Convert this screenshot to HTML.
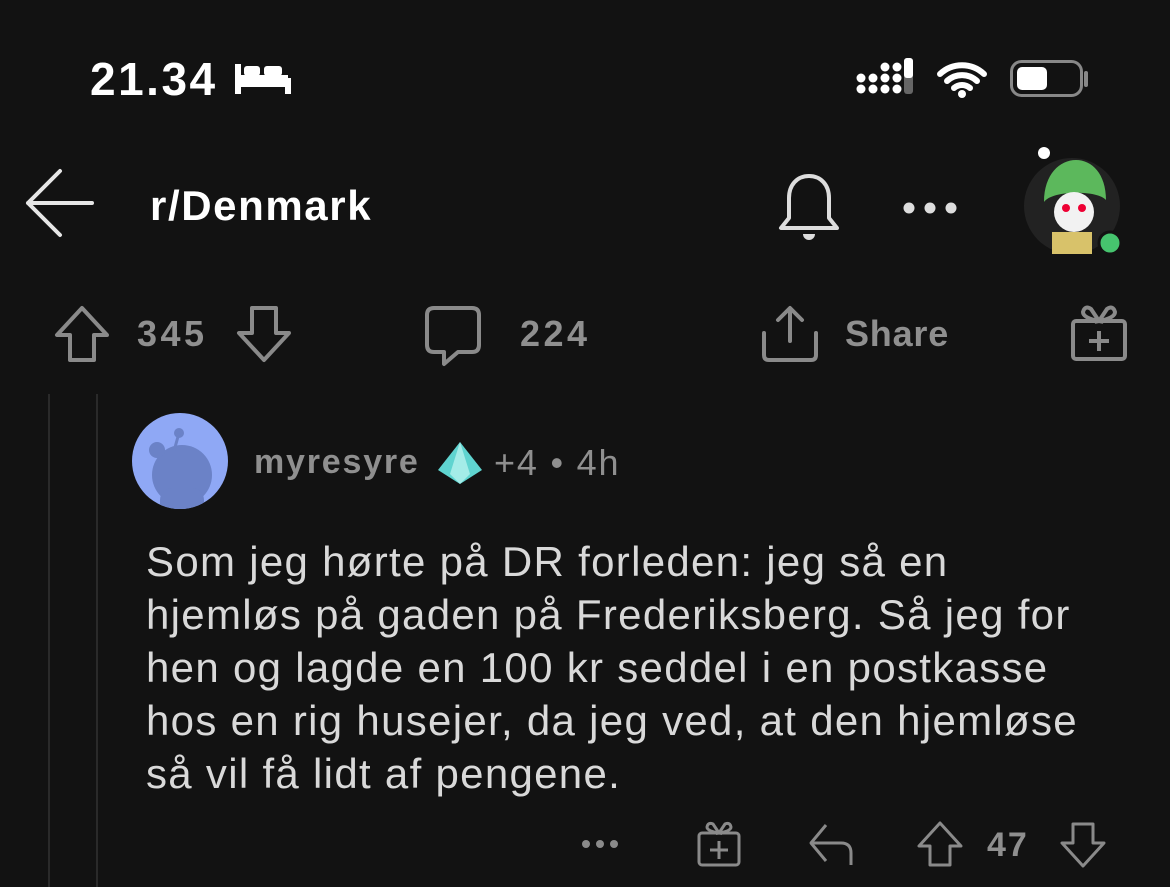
<!DOCTYPE html>
<html><head><meta charset="utf-8"><style>
body{margin:0;width:1170px;height:887px;background:#121212;overflow:hidden;font-family:"Liberation Sans",sans-serif;position:relative}
.a{position:absolute;white-space:nowrap}
svg{position:absolute;overflow:visible}
</style></head><body>
<div class="a" style="left:90px;top:52px;font-size:46px;font-weight:bold;color:#fff;letter-spacing:2.5px">21.34</div>
<svg style="left:236px;top:60px" width="54" height="36"><path d="M2 4v30M52 18v16M2 24h50" stroke="#fff" stroke-width="6" fill="none"/><rect x="2" y="15" width="50" height="10" fill="#fff"/><rect x="8" y="6" width="16" height="10" rx="3" fill="#fff"/><rect x="28" y="6" width="18" height="10" rx="3" fill="#fff"/></svg>
<svg style="left:856px;top:58px" width="60" height="40" fill="#fff"><circle cx="5" cy="31" r="4.5"/><circle cx="5" cy="20" r="4.5"/><circle cx="17" cy="31" r="4.5"/><circle cx="17" cy="20" r="4.5"/><circle cx="29" cy="31" r="4.5"/><circle cx="29" cy="20" r="4.5"/><circle cx="29" cy="9" r="4.5"/><circle cx="41" cy="31" r="4.5"/><circle cx="41" cy="20" r="4.5"/><circle cx="41" cy="9" r="4.5"/><rect x="48" y="0" width="9" height="36" rx="3" fill="#666"/><rect x="48" y="0" width="9" height="20" rx="3"/></svg>
<svg style="left:936px;top:60px" width="52" height="38"><path d="M4 14a32 32 0 0 1 44 0M11 21a22 22 0 0 1 30 0M18 28a12 12 0 0 1 16 0" stroke="#fff" stroke-width="6" fill="none" stroke-linecap="round"/><circle cx="26" cy="34" r="4" fill="#fff"/></svg>
<svg style="left:1010px;top:60px" width="82" height="38"><rect x="1.5" y="1.5" width="70" height="34" rx="10" fill="none" stroke="#888" stroke-width="3"/><rect x="7" y="7" width="30" height="23" rx="5" fill="#fff"/><path d="M76 13v12" stroke="#888" stroke-width="4" stroke-linecap="round"/></svg>

<svg style="left:24px;top:168px" width="72" height="70"><path d="M68 35H4M36 3L4 35l32 32" stroke="#e6e6e6" stroke-width="4" fill="none" stroke-linecap="round" stroke-linejoin="round"/></svg>
<div class="a" style="left:150px;top:182px;font-size:42px;font-weight:bold;color:#fff;letter-spacing:1.6px">r/Denmark</div>
<svg style="left:775px;top:172px" width="70" height="72"><path d="M34 4c-12 0-20 9-20 22v20l-8 10h56l-8-10V26c0-13-8-22-20-22z" stroke="#ddd" stroke-width="4" fill="none" stroke-linejoin="round"/><path d="M28 62h12a6 6 0 0 1-12 0z" fill="#ddd"/></svg>
<svg style="left:902px;top:200px" width="60" height="16" fill="#ddd"><circle cx="7" cy="8" r="5.5"/><circle cx="28" cy="8" r="5.5"/><circle cx="49" cy="8" r="5.5"/></svg>
<svg style="left:1024px;top:142px" width="104" height="116"><circle cx="48" cy="64" r="48" fill="#222"/><path d="M20 60c0-28 16-42 32-42s30 14 30 40c-8-10-54-10-62 2z" fill="#5cb85c"/><circle cx="50" cy="70" r="20" fill="#f2f2f2"/><circle cx="42" cy="66" r="4" fill="#e03"/><circle cx="58" cy="66" r="4" fill="#e03"/><path d="M28 90h40v22H28z" fill="#d8c26a"/><circle cx="20" cy="11" r="6" fill="#fff"/><circle cx="86" cy="101" r="11" fill="#46c46e" stroke="#121212" stroke-width="3"/></svg>

<svg style="left:54px;top:305px" width="56" height="58"><path d="M28 3L3 30h13v25h24V30h13z" stroke="#8a8a8a" stroke-width="4" fill="none" stroke-linejoin="round"/></svg>
<div class="a" style="left:137px;top:313px;font-size:36px;font-weight:bold;color:#8f8f8f;letter-spacing:3.5px">345</div>
<svg style="left:236px;top:305px" width="56" height="58"><path d="M28 55L3 28h13V3h24v25h13z" stroke="#8a8a8a" stroke-width="4" fill="none" stroke-linejoin="round"/></svg>
<svg style="left:424px;top:305px" width="58" height="58"><path d="M10 3h38q7 0 7 7v30q0 7-7 7H34l-14 12v-12h-10q-7 0-7-7V10q0-7 7-7z" stroke="#8a8a8a" stroke-width="4" fill="none" stroke-linejoin="round"/></svg>
<div class="a" style="left:520px;top:313px;font-size:36px;font-weight:bold;color:#8f8f8f;letter-spacing:3.5px">224</div>
<svg style="left:760px;top:305px" width="60" height="58"><path d="M30 36V4M18 15L30 3l12 12M4 28v22q0 5 5 5h42q5 0 5-5V28" stroke="#8a8a8a" stroke-width="4" fill="none" stroke-linecap="round" stroke-linejoin="round"/></svg>
<div class="a" style="left:845px;top:313px;font-size:36px;font-weight:bold;color:#8f8f8f;letter-spacing:0.8px">Share</div>
<svg style="left:1070px;top:303px" width="58" height="60"><rect x="3" y="18" width="52" height="38" rx="3" stroke="#8a8a8a" stroke-width="4" fill="none"/><path d="M29 18l-8-12q-6-4-8 3 0 6 16 9zM29 18l8-12q6-4 8 3 0 6-16 9zM29 28v20M19 38h20" stroke="#8a8a8a" stroke-width="4" fill="none"/></svg>

<div class="a" style="left:48px;top:394px;width:2px;height:493px;background:#2a2a2a"></div>
<div class="a" style="left:96px;top:394px;width:2px;height:493px;background:#2a2a2a"></div>
<svg style="left:132px;top:413px" width="96" height="96"><defs><clipPath id="c"><circle cx="48" cy="48" r="48"/></clipPath></defs><circle cx="48" cy="48" r="48" fill="#8fa8f5"/><g clip-path="url(#c)" fill="#6b82c7"><circle cx="50" cy="62" r="30"/><rect x="28" y="75" width="44" height="30" rx="12"/><circle cx="25" cy="37" r="8"/><circle cx="47" cy="20" r="5"/></g><path d="M47 20l-5 18" stroke="#6b82c7" stroke-width="3"/></svg>
<div class="a" style="left:254px;top:443px;font-size:34px;font-weight:bold;color:#8f8f8f;letter-spacing:1.8px">myresyre</div>
<svg style="left:436px;top:440px" width="48" height="46"><path d="M24 2L2 30l22 14 22-14z" fill="#5fd4d0"/><path d="M24 2L14 34l10 10 10-10z" fill="#a4ece8"/></svg>
<div class="a" style="left:494px;top:442px;font-size:36px;color:#8f8f8f;letter-spacing:1.8px">+4 • 4h</div>

<div class="a" style="left:146px;top:535px;font-size:42px;line-height:53px;color:#d9d9d9;letter-spacing:1.3px">Som jeg hørte på DR forleden: jeg så en<br>hjemløs på gaden på Frederiksberg. Så jeg for<br>hen og lagde en 100 kr seddel i en postkasse<br>hos en rig husejer, da jeg ved, at den hjemløse<br>så vil få lidt af pengene.</div>

<svg style="left:580px;top:837px" width="42" height="14" fill="#8a8a8a"><circle cx="6" cy="7" r="4"/><circle cx="20" cy="7" r="4"/><circle cx="34" cy="7" r="4"/></svg>
<svg style="left:697px;top:821px" width="46" height="46"><rect x="2" y="12" width="40" height="32" rx="3" stroke="#8a8a8a" stroke-width="3" fill="none"/><path d="M22 12l-6-9q-5-2-6 3 0 4 12 6zM22 12l6-9q5-2 6 3 0 4-12 6zM22 20v18M13 29h18" stroke="#8a8a8a" stroke-width="3" fill="none"/></svg>
<svg style="left:806px;top:822px" width="46" height="42"><path d="M20 3L5 21l15 18M5 21h30q10 0 10 10v12" stroke="#8a8a8a" stroke-width="3" fill="none" stroke-linejoin="round"/></svg>
<svg style="left:917px;top:821px" width="46" height="46"><path d="M23 2L2 25h11v19h20V25h11z" stroke="#8a8a8a" stroke-width="3" fill="none" stroke-linejoin="round"/></svg>
<div class="a" style="left:987px;top:826px;font-size:34px;font-weight:bold;color:#8f8f8f;letter-spacing:2px">47</div>
<svg style="left:1060px;top:822px" width="46" height="46"><path d="M23 44L2 21h11V2h20v19h11z" stroke="#8a8a8a" stroke-width="3" fill="none" stroke-linejoin="round"/></svg>
</body></html>
